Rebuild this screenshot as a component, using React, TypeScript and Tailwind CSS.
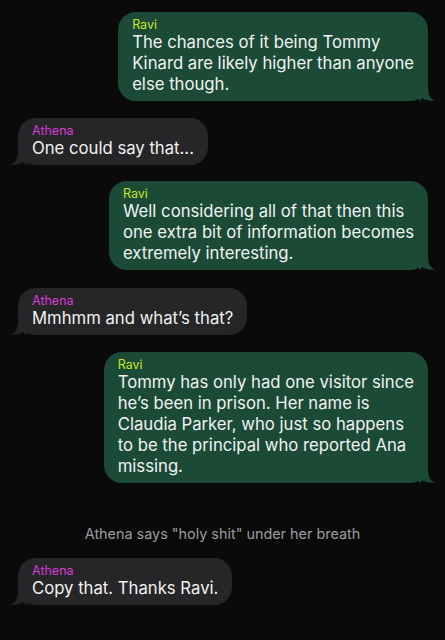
import React from "react";

type Msg =
  | { kind: "ravi"; lines: string[]; mt: string }
  | { kind: "athena"; lines: string[]; mt: string }
  | { kind: "note"; text: string; mt: string };

const messages: Msg[] = [
  {
    kind: "ravi",
    mt: "mt-[12px]",
    lines: ["The chances of it being Tommy", "Kinard are likely higher than anyone", "else though."],
  },
  { kind: "athena", mt: "mt-[17px]", lines: ["One could say that..."] },
  {
    kind: "ravi",
    mt: "mt-[16px]",
    lines: [
      "Well considering all of that then this",
      "one extra bit of information becomes",
      "extremely interesting.",
    ],
  },
  { kind: "athena", mt: "mt-[18px]", lines: ["Mmhmm and what\u2019s that?"] },
  {
    kind: "ravi",
    mt: "mt-[17px]",
    lines: [
      "Tommy has only had one visitor since",
      "he\u2019s been in prison. Her name is",
      "Claudia Parker, who just so happens",
      "to be the principal who reported Ana",
      "missing.",
    ],
  },
  { kind: "note", mt: "mt-[41px]", text: "Athena says \"holy shit\" under her breath" },
  { kind: "athena", mt: "mt-[14px]", lines: ["Copy that. Thanks Ravi."] },
];

function Tail({ color, side }: { color: string; side: "left" | "right" }) {
  return (
    <svg
      width="16"
      height="20"
      viewBox="0 0 16 20"
      className={
        side === "right"
          ? "absolute bottom-0 right-[-7px]"
          : "absolute bottom-0 left-[-7px] -scale-x-100"
      }
    >
      <path
        d="M0 0 H9 V6 C9 13 11 17.5 15.5 19.6 C11 20.3 6.5 19.2 3.5 17 C2.5 18.5 1.2 19.5 0 20 Z"
        fill={color}
      />
    </svg>
  );
}

function Bubble({ kind, lines, mt }: { kind: "ravi" | "athena"; lines: string[]; mt: string }) {
  const ravi = kind === "ravi";
  const bg = ravi ? "#1b4b37" : "#262628";
  return (
    <div className={`${mt} ${ravi ? "self-end mr-[17px]" : "self-start ml-[18px]"}`}>
      <div
        className={`relative rounded-[18px] pl-[14px] pr-[14px] pt-[5px] pb-[6px] ${
          ravi ? "bg-[#1b4b37]" : "bg-[#262628]"
        }`}
      >
        <div
          className={`text-[12.5px] leading-[15px] ${
            ravi ? "text-[#c8e626]" : "text-[#d93ad9]"
          }`}
        >
          {ravi ? "Ravi" : "Athena"}
        </div>
        <div className="text-[16.7px] leading-[21px] text-[#f2f2f2] whitespace-pre">
          {lines.map((l, i) => (
            <div key={i}>{l}</div>
          ))}
        </div>
        <Tail color={bg} side={ravi ? "right" : "left"} />
      </div>
    </div>
  );
}

export default function App() {
  return (
    <div
      className="w-[445px] h-[640px] overflow-hidden bg-[#0a0a0a] flex flex-col"
      style={{ fontFamily: "Inter, 'Liberation Sans', sans-serif" }}
    >
      {messages.map((m, i) =>
        m.kind === "note" ? (
          <div
            key={i}
            className={`${m.mt} text-center text-[14.4px] leading-[20px] text-[#9b9b9f]`}
          >
            {m.text}
          </div>
        ) : (
          <Bubble key={i} kind={m.kind} lines={m.lines} mt={m.mt} />
        )
      )}
    </div>
  );
}
